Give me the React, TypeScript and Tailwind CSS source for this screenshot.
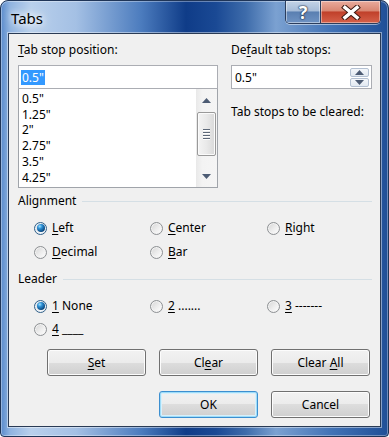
import React from "react";

function U({ children }: { children: React.ReactNode }) {
  return <span className="underline decoration-1 underline-offset-[2px]">{children}</span>;
}

function Radio({ checked }: { checked?: boolean }) {
  return checked ? (
    <span className="flex h-[13px] w-[13px] shrink-0 items-center justify-center rounded-full border border-[#2f5f88] bg-[linear-gradient(135deg,#d2d9e0,#f4f7fa_70%,#ffffff)] shadow-[inset_0_0_0_1px_#eef2f6]">
      <span className="h-[8px] w-[8px] rounded-full bg-[radial-gradient(circle_at_35%_30%,#9fe2ff_0%,#2c8fd4_30%,#0c4c85_70%,#08304f_100%)]" />
    </span>
  ) : (
    <span className="flex h-[13px] w-[13px] shrink-0 rounded-full border border-[#8d9093] bg-[linear-gradient(135deg,#d4d4d4,#eeeeee_55%,#ffffff)] shadow-[inset_0_0_0_1px_#f3f3f3]" />
  );
}

function RadioItem({ checked, children }: { checked?: boolean; children: React.ReactNode }) {
  return (
    <div className="flex h-[20px] items-center gap-[5px]">
      <Radio checked={checked} />
      <span className="whitespace-pre leading-[16px]">{children}</span>
    </div>
  );
}

function Btn({ children, def }: { children: React.ReactNode; def?: boolean }) {
  return def ? (
    <div className="flex h-[27px] w-[99px] items-center justify-center rounded-[3px] border border-[#3c8fd0] bg-[linear-gradient(#f2f2f2_0%,#ebebeb_50%,#dddddd_50%,#cfcfcf_100%)] shadow-[inset_0_0_0_1px_#9edcf8,inset_0_0_0_2px_#d8f0fb]">
      {children}
    </div>
  ) : (
    <div className="flex h-[27px] w-[99px] items-center justify-center rounded-[3px] border border-[#707070] bg-[linear-gradient(#f2f2f2_0%,#ebebeb_50%,#dddddd_50%,#cfcfcf_100%)] shadow-[inset_0_0_0_1px_#fcfcfc]">
      {children}
    </div>
  );
}

function Tri({ up }: { up?: boolean }) {
  return (
    <svg width="9" height="5" viewBox="0 0 9 5">
      {up ? <polygon points="0,5 9,5 4.5,0" fill="#4d5c74" /> : <polygon points="0,0 9,0 4.5,5" fill="#4d5c74" />}
    </svg>
  );
}

export default function App() {
  return (
    <div className="h-[437px] w-[389px] bg-white [font-family:'Noto_Sans',sans-serif] text-[12px] text-black">
      <div className="flex h-[437px] w-[389px] flex-col rounded-t-[8px] rounded-b-[4px] border border-[#1f3558] bg-[linear-gradient(90deg,#5a8bcc_0px,#8fb3e0_9px,#b9d0ec_30px,#a4c0e4_75px,#4c7cbe_140px,#0f3c88_185px,#1a4994_215px,#3e6cab_245px,#7ba1d1_275px,#4273b6_330px,#1f4e96_389px)] shadow-[inset_0_0_0_1px_rgba(255,255,255,0.35)]">
        {/* title bar */}
        <div className="flex h-[32px] items-start">
          <div className="ml-[10px] mt-[7px] text-[15px] leading-[20px] [text-shadow:0_0_6px_#ffffff,0_0_10px_#ffffff,0_0_14px_#dbe8f7]">
            Tabs
          </div>
          <div className="ml-auto mr-[7px] flex h-[23px] overflow-hidden rounded-b-[5px] border border-t-0 border-[#2b3d5c] shadow-[0_1px_0_rgba(255,255,255,0.5)]">
            <div className="flex w-[35px] items-center justify-center border-r border-[#2b3d5c] bg-[linear-gradient(#c3d3e7_0%,#a6bcd8_45%,#5a7fb1_50%,#6f93c3_100%)] shadow-[inset_0_0_0_1px_rgba(255,255,255,0.45)]">
              <span className="text-[18px] font-bold leading-none text-white [text-shadow:0_0_1px_#1c2a44,0_0_1px_#1c2a44,0_0_2px_#1c2a44]">?</span>
            </div>
            <div className="flex w-[59px] items-center justify-center bg-[linear-gradient(#e9ab9d_0%,#d98772_45%,#c0402a_50%,#d5614a_100%)] shadow-[inset_0_0_0_1px_rgba(255,255,255,0.4)]">
              <svg width="20" height="15" viewBox="0 0 20 15">
                <path d="M4 2.5 L16 12.5 M16 2.5 L4 12.5" stroke="#3a1710" strokeWidth="5.5" strokeLinecap="square" />
                <path d="M4 2.5 L16 12.5 M16 2.5 L4 12.5" stroke="#ffffff" strokeWidth="3.5" strokeLinecap="square" />
              </svg>
            </div>
          </div>
        </div>

        {/* client area */}
        <div className="mx-[7px] flex h-[394px] flex-col border border-[#2a3b55] bg-[#f0f0f0] pl-[9px] pt-[8px] shadow-[0_0_0_1px_rgba(255,255,255,0.45)]">
          <div className="flex gap-[13px]">
            {/* left column */}
            <div className="flex w-[200px] flex-col">
              <div className="h-[16px] leading-[16px]">
                <U>T</U>ab stop position:
              </div>
              <div className="mt-[7px] flex h-[24px] items-center border border-[#abadb3] bg-white pl-[2px]">
                <span className="bg-[#3399ff] px-[1px] leading-[15px] text-white">0.5"</span>
              </div>
              <div className="flex h-[99px] border border-t-0 border-[#a0a4aa] bg-white">
                <div className="flex flex-1 flex-col pl-[3px] pt-[2px] leading-[15.7px]">
                  <div>0.5"</div>
                  <div>1.25"</div>
                  <div>2"</div>
                  <div>2.75"</div>
                  <div>3.5"</div>
                  <div>4.25"</div>
                </div>
                <div className="flex w-[21px] flex-col items-center bg-[linear-gradient(90deg,#e9e9e9,#f3f3f3_30%,#f5f5f5)]">
                  <div className="flex h-[23px] items-center justify-center">
                    <Tri up />
                  </div>
                  <div className="flex h-[44px] w-[19px] flex-col items-center justify-center gap-[2px] rounded-[2px] border border-[#9a9a9a] bg-[linear-gradient(90deg,#f4f4f4,#e9e9e9_50%,#d9d9d9)] shadow-[inset_0_0_0_1px_#fbfbfb]">
                    <span className="h-px w-[7px] bg-[#5d6878] shadow-[0_1px_0_#ffffff]" />
                    <span className="h-px w-[7px] bg-[#5d6878] shadow-[0_1px_0_#ffffff]" />
                    <span className="h-px w-[7px] bg-[#5d6878] shadow-[0_1px_0_#ffffff]" />
                    <span className="h-px w-[7px] bg-[#5d6878] shadow-[0_1px_0_#ffffff]" />
                  </div>
                  <div className="flex flex-1 items-end justify-center pb-[8px]">
                    <Tri />
                  </div>
                </div>
              </div>
            </div>
            {/* right column */}
            <div className="flex w-[141px] flex-col">
              <div className="h-[16px] leading-[16px]">
                De<U>f</U>ault tab stops:
              </div>
              <div className="mt-[7px] flex h-[24px] items-center border border-[#abadb3] bg-white pl-[3px] pr-[2px]">
                <span className="flex-1 leading-[15px]">0.5"</span>
                <div className="flex w-[19px] flex-col gap-px">
                  <div className="flex h-[9px] items-center justify-center rounded-[2px] border border-[#b3c0d2] bg-[linear-gradient(#f4f7fb,#e2e9f1)]">
                    <Tri up />
                  </div>
                  <div className="flex h-[9px] items-center justify-center rounded-[2px] border border-[#b3c0d2] bg-[linear-gradient(#f4f7fb,#e2e9f1)]">
                    <Tri />
                  </div>
                </div>
              </div>
              <div className="mt-[15px] h-[16px] leading-[16px]">Tab stops to be cleared:</div>
            </div>
          </div>

          {/* Alignment */}
          <div className="mt-[5px] flex h-[16px] items-center pr-[8px]">
            <span className="leading-[16px]">Alignment</span>
            <span className="ml-[6px] h-px flex-1 bg-[#d5dfe5]" />
          </div>
          <div className="ml-[16px] mt-[9px] grid grid-cols-[116px_117px_auto] gap-y-[4px]">
            <RadioItem checked>
              <U>L</U>eft
            </RadioItem>
            <RadioItem>
              <U>C</U>enter
            </RadioItem>
            <RadioItem>
              <U>R</U>ight
            </RadioItem>
            <RadioItem>
              <U>D</U>ecimal
            </RadioItem>
            <RadioItem>
              <U>B</U>ar
            </RadioItem>
          </div>

          {/* Leader */}
          <div className="mt-[9px] flex h-[16px] items-center pr-[8px]">
            <span className="leading-[16px]">Leader</span>
            <span className="ml-[6px] h-px flex-1 bg-[#d5dfe5]" />
          </div>
          <div className="ml-[16px] mt-[9px] grid grid-cols-[116px_117px_auto] gap-y-[3px]">
            <RadioItem checked>
              <U>1</U> None
            </RadioItem>
            <RadioItem>
              <U>2</U> .......
            </RadioItem>
            <RadioItem>
              <U>3</U> -------
            </RadioItem>
            <RadioItem>
              <U>4</U> ____
            </RadioItem>
          </div>

          {/* buttons */}
          <div className="ml-[29px] mt-[10px] flex gap-[13px]">
            <Btn>
              <span>
                <U>S</U>et
              </span>
            </Btn>
            <Btn>
              <span>
                Cl<U>e</U>ar
              </span>
            </Btn>
            <Btn>
              <span>
                Clear <U>A</U>ll
              </span>
            </Btn>
          </div>
          <div className="ml-[141px] mt-[15px] flex gap-[13px]">
            <Btn def>
              <span>OK</span>
            </Btn>
            <Btn>
              <span>Cancel</span>
            </Btn>
          </div>
        </div>
      </div>
    </div>
  );
}
